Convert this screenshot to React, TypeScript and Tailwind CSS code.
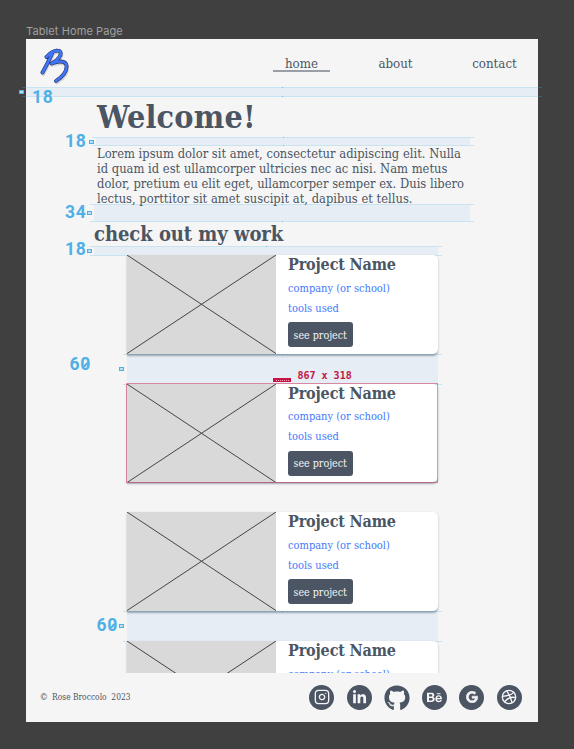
import type { ReactNode } from "react";
import { Dribbble, Instagram } from "lucide-react";
import { FaBehance, FaGithub, FaGoogle, FaLinkedinIn } from "react-icons/fa";

const SERIF = "font-['DejaVu_Serif_Condensed','DejaVu_Serif',serif] [font-stretch:condensed]";

function Logo() {
  const stem = "M13 5.5 C10.5 12 7 18 3.5 24.5";
  const bowls = "M7.5 9 C11 4.5 17 1.5 20.5 3 C24 6 19 12.5 12.5 15.5 C18.5 13 26.5 12 27.5 17.5 C28.3 24.5 23 29 17 33";
  return (
    <svg className="h-[38px] w-[34px]" viewBox="0 0 34 38" fill="none" strokeLinecap="round" strokeLinejoin="round">
      <path d={`${stem} ${bowls}`} stroke="#b9bcc4" strokeWidth="3.6" transform="translate(0.8 1.6)" opacity="0.6" />
      <path d={`${stem} ${bowls}`} stroke="#2b3a66" strokeWidth="3.9" />
      <circle cx="17.5" cy="2.6" r="1.8" fill="#2b3a66" />
      <path d={`${stem} ${bowls}`} stroke="#3f74fb" strokeWidth="2.7" />
    </svg>
  );
}

function Card() {
  return (
    <article className="flex h-[98.6px] w-[311px] shrink-0 rounded-r-[5px] bg-white shadow-[0_1.5px_2px_rgba(60,80,100,0.45)]">
      <svg className="h-full w-[149px] bg-[#d9d9d9]" viewBox="0 0 149 98.6" preserveAspectRatio="none">
        <path d="M0 0 L149 98.6 M149 0 L0 98.6" stroke="#333" strokeWidth="0.9" />
      </svg>
      <div className="flex flex-col items-start pl-[12.5px] whitespace-nowrap">
        <h3 className="pt-px text-[16px] leading-[18px] font-bold tracking-[-0.15px] text-[#4b5563]">Project Name</h3>
        <p className="mt-[7.5px] text-[11px] leading-[14px] text-[#4479fb]">company (or school)</p>
        <p className="mt-[6px] text-[11px] leading-[14px] text-[#4479fb]">tools used</p>
        <button className="mt-[6.5px] h-[25px] w-[64.5px] rounded-[3px] bg-[#4b5563] text-[10.6px] leading-[24px] text-[#f5f5f5]">
          see project
        </button>
      </div>
    </article>
  );
}

/* Spacing guide: tinted band bounded by two lines that overhang it by 4px, with a tick on each line. */
function Guide({ className, tick = "left-[192px]" }: { className: string; tick?: string }) {
  return (
    <div className={`absolute border-y border-[rgba(79,176,230,0.26)] ${className}`}>
      <div className="mx-[4px] h-full bg-[#e6edf4]" />
      <span className={`absolute -top-px h-px w-px bg-[#6fbfe8] ${tick}`} />
      <span className={`absolute -bottom-px h-px w-px bg-[#6fbfe8] ${tick}`} />
    </div>
  );
}

function Mark({ className }: { className: string }) {
  return (
    <div className={`absolute flex h-[4px] w-[5px] items-center justify-center bg-[#4fb0e6] ${className}`}>
      <span className="h-[1.5px] w-[3px] bg-[#b9e0f5]" />
    </div>
  );
}

function Measure({ className, children }: { className: string; children: ReactNode }) {
  return (
    <div
      className={`absolute font-[Roboto,sans-serif] text-[17.5px] leading-[20px] font-bold tracking-[0.7px] text-[#4fb0e6] [font-stretch:normal] ${className}`}
    >
      {children}
    </div>
  );
}

function SlashedZero() {
  return (
    <span className="relative">
      0<span className="absolute top-[9.5px] left-[2.5px] h-[1.5px] w-[5px] rotate-[-50deg] bg-[#4fb0e6]" />
    </span>
  );
}

function Disc({ children }: { children: ReactNode }) {
  return <a className="flex size-[25px] items-center justify-center rounded-full bg-[#4b5563] text-[#f5f5f5]">{children}</a>;
}

export default function App() {
  return (
    <div className={`relative h-[749px] w-[574px] overflow-hidden bg-[#404040] pl-[26px] ${SERIF}`}>
      <div className="h-[39px] pt-[24px] font-[Inter,sans-serif] text-[11px] leading-[14px] tracking-[0.1px] text-[#a0a0a0] [font-stretch:normal]">
        Tablet Home Page
      </div>

      <div className="relative flex h-[683px] w-[512px] flex-col bg-[#f5f5f5] text-[#4b5563]">
        <Guide className="top-[48px] left-[-4px] h-[10px] w-[520px]" tick="left-[260px]" />
        <Guide className="top-[98px] left-[66px] h-[9px] w-[382px]" tick="left-[191px]" />
        <Guide className="top-[165px] left-[64px] h-[18px] w-[384px]" />
        <Guide className="top-[207px] left-[64px] h-[10px] w-[352px]" tick="left-[176px]" />
        <Guide className="top-[315px] left-[97px] h-[31px] w-[319px]" tick="left-[159px]" />
        <Guide className="top-[572px] left-[97px] h-[31px] w-[319px]" tick="left-[159px]" />

        <header className="relative flex h-[58px] shrink-0 items-start pl-[13px]">
          <div className="pt-[9px]">
            <Logo />
          </div>
          <nav className="mt-[17px] ml-[200px] flex text-[13.2px] leading-[16px]">
            <a className="h-[16px] w-[57px] border-b-2 border-[#9a9fa7] text-center leading-[16px]">home</a>
            <a className="ml-[37px] w-[57px] text-center">about</a>
            <a className="ml-[42px] w-[57px] text-center">contact</a>
          </nav>
        </header>

        <main className="relative h-[576px] shrink-0 overflow-hidden">
          <h1 className="ml-[71px] h-[40px] text-[32px] leading-[40px] font-bold tracking-[0.2px]">Welcome!</h1>
          <p className="mt-[8.9px] ml-[71px] text-[12.8px] leading-[15px] tracking-[0.02px] whitespace-nowrap">
            Lorem ipsum dolor sit amet, consectetur adipiscing elit. Nulla
            <br />
            id quam id est ullamcorper ultricies nec ac nisi. Nam metus
            <br />
            dolor, pretium eu elit eget, ullamcorper semper ex. Duis libero
            <br />
            lectus, porttitor sit amet suscipit at, dapibus et tellus.
          </p>
          <h2 className="mt-[16.1px] ml-[68px] text-[20px] leading-[24px] font-bold tracking-[-0.05px] whitespace-nowrap">
            check out my work
          </h2>
          <div className="mt-[9.3px] ml-[100.5px] flex flex-col gap-[30px]">
            <Card />
            <Card />
            <Card />
            <Card />
          </div>
        </main>

        <footer className="flex h-[49px] items-center justify-between pr-[16.5px] pl-[13.5px]">
          <div className="flex items-center gap-[4px] text-[8.4px] whitespace-nowrap">
            <span className="text-[9.5px]">©</span>
            <span>Rose Broccolo&nbsp; 2023</span>
          </div>
          <div className="flex gap-[12.5px]">
            <Disc>
              <Instagram size={16} strokeWidth={2} />
            </Disc>
            <Disc>
              <FaLinkedinIn size={15} />
            </Disc>
            <a className="text-[#4b5563]">
              <FaGithub size={26} className="-mx-[0.5px]" />
            </a>
            <Disc>
              <FaBehance size={15} />
            </Disc>
            <Disc>
              <FaGoogle size={12} stroke="currentColor" strokeWidth={24} />
            </Disc>
            <Disc>
              <Dribbble size={16} strokeWidth={2} />
            </Disc>
          </div>
        </footer>
      </div>

      <Measure className="top-[87px] left-[32px]">18</Measure>
      <Measure className="top-[131px] left-[65px]">18</Measure>
      <Measure className="top-[202px] left-[65px]">34</Measure>
      <Measure className="top-[238.5px] left-[65px]">18</Measure>
      <Measure className="top-[354px] left-[69.5px]">
        6<SlashedZero />
      </Measure>
      <Measure className="top-[615px] left-[96.5px]">
        6<SlashedZero />
      </Measure>
      <Mark className="top-[90px] left-[19px]" />
      <Mark className="top-[140px] left-[89px]" />
      <Mark className="top-[211px] left-[87px]" />
      <Mark className="top-[249px] left-[87px]" />
      <Mark className="top-[367px] left-[119px]" />
      <Mark className="top-[624px] left-[119px]" />

      <div className="absolute top-[383px] left-[126px] h-[100px] w-[312px] border border-[rgba(204,18,66,0.45)]" />
      <div className="absolute top-[378px] left-[273px] flex h-[4px] w-[18px] items-center justify-center bg-[#cc1242]">
        <span className="w-[13px] border-t border-dotted border-[#f0a8ba]" />
      </div>
      <div className="absolute top-[369px] left-[297.5px] font-['DejaVu_Sans_Mono',monospace] text-[10px] leading-[13px] font-bold whitespace-nowrap text-[#c41445]">
        867 x 318
      </div>
    </div>
  );
}
